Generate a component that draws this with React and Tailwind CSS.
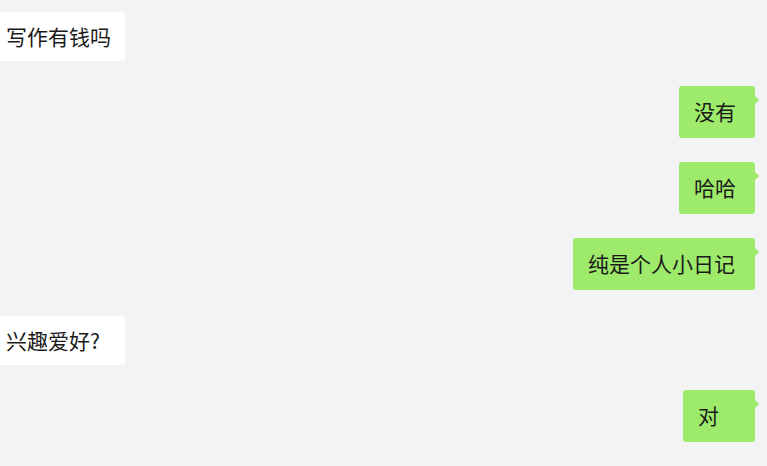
import React from "react";

const messages = [
  { from: "them", text: "写作有钱吗", mt: "mt-0" },
  { from: "me", text: "没有", w: "w-[76px]", mt: "mt-[25px]" },
  { from: "me", text: "哈哈", w: "w-[76px]", mt: "mt-[24px]" },
  { from: "me", text: "纯是个人小日记", w: "w-[182px]", mt: "mt-[24px]" },
  { from: "them", text: "兴趣爱好?", mt: "mt-[26px]" },
  { from: "me", text: "对", w: "w-[72px]", mt: "mt-[25px]" },
];

const Bubble = ({ msg }) => {
  if (msg.from === "them") {
    return (
      <div className={`${msg.mt} self-start w-[125px] h-[49px] bg-white rounded-r-[2px] flex items-center pl-[6px] text-[21px] text-[#1a1a1a]`}>
        {msg.text}
      </div>
    );
  }
  return (
    <div className={`${msg.mt} self-end mr-3 relative ${msg.w} h-[52px] bg-[#9eea6a] rounded-[3px] flex items-center pl-[15px] text-[21px] text-[#1a1a1a]`}>
      {msg.text}
      <span className="absolute -right-[4px] top-[10px] w-0 h-0 border-y-[4px] border-y-transparent border-l-[4px] border-l-[#9eea6a]" />
    </div>
  );
};

export default function App() {
  return (
    <div
      className="w-[767px] h-[466px] bg-[#f3f3f4] flex flex-col pt-3 overflow-hidden"
      style={{ fontFamily: '"Microsoft YaHei", "Noto Sans CJK SC", sans-serif' }}
    >
      {messages.map((m, i) => (
        <Bubble key={i} msg={m} />
      ))}
    </div>
  );
}
